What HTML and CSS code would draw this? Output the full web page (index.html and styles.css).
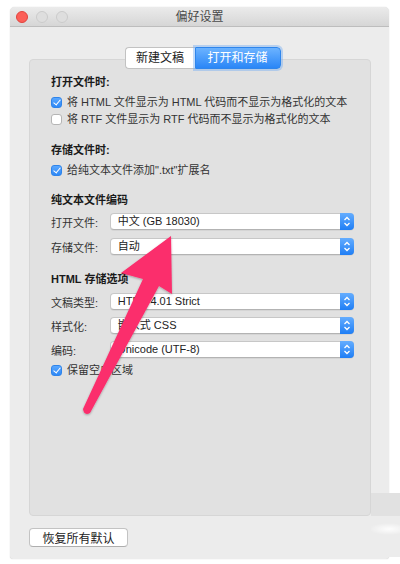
FILE: index.html
```html
<!DOCTYPE html>
<html lang="zh-CN">
<head>
  <meta charset="UTF-8" />
  <title>偏好设置</title>
  <link rel="stylesheet" href="styles.css">
</head>
<body>
  <div class="window">
    <div class="titlebar">
      <div class="lights">
        <span class="light red"></span>
        <span class="light"></span>
        <span class="light"></span>
      </div>
      <div class="title">偏好设置</div>
    </div>

    <div class="content">
      <div class="panel">
        <div class="segmented">
          <span class="seg">新建文稿</span>
          <span class="seg active">打开和存储</span>
        </div>

        <div class="sec s1">
          <div class="sec-title">打开文件时:</div>
          <label class="check"><span class="box on"></span>将 HTML 文件显示为 HTML 代码而不显示为格式化的文本</label>
          <label class="check"><span class="box"></span>将 RTF 文件显示为 RTF 代码而不显示为格式化的文本</label>
        </div>

        <div class="sec s2">
          <div class="sec-title">存储文件时:</div>
          <label class="check"><span class="box on"></span>给纯文本文件添加".txt"扩展名</label>
        </div>

        <div class="sec s3">
          <div class="sec-title">纯文本文件编码</div>
          <div class="field"><span class="label">打开文件:</span><span class="popup">中文 (GB 18030)</span></div>
          <div class="field"><span class="label">存储文件:</span><span class="popup">自动</span></div>
        </div>

        <div class="sec s4">
          <div class="sec-title">HTML 存储选项</div>
          <div class="field"><span class="label">文稿类型:</span><span class="popup">HTML 4.01 Strict</span></div>
          <div class="field"><span class="label">样式化:</span><span class="popup">嵌入式 CSS</span></div>
          <div class="field"><span class="label">编码:</span><span class="popup">Unicode (UTF-8)</span></div>
          <label class="check last"><span class="box on"></span>保留空白区域</label>
        </div>
      </div>

      <div class="footer">
        <button class="btn">恢复所有默认</button>
      </div>
    </div>
  </div>

  <!-- screenshot seam at the lower right -->
  <div class="seam">
    <div class="seam-top"></div>
    <div class="seam-bottom"></div>
  </div>

  <svg class="arrow" width="400" height="564" viewBox="0 0 400 564">
    <defs>
      <filter id="sh" x="-20%" y="-20%" width="140%" height="140%">
        <feDropShadow dx="0" dy="1" stdDeviation="1" flood-color="#000" flood-opacity="0.3"/>
      </filter>
    </defs>
    <path filter="url(#sh)" fill="#fb2d6c"
      d="M171 236 L121 273 L143 279 L83 409 Q84 416 90 413 L159 286 L172 294 Z"/>
  </svg>
</body>
</html>
```

FILE: styles.css
```css
* { margin: 0; padding: 0; box-sizing: border-box; }

body {
  background: #ffffff;
  font-family: "Liberation Sans", "Noto Sans CJK SC", sans-serif;
  font-size: 11px;
  color: #222;
  width: 400px; height: 564px;
  overflow: hidden;
}

.window {
  margin: 7px 0 0 10px;
  width: 379px; height: 552px;
  background: #ececec;
  border-radius: 5px 5px 3px 3px;
  box-shadow: 0 0 1px rgba(0,0,0,0.25);
  overflow: hidden;
}

.titlebar {
  height: 20px;
  display: flex; align-items: center;
  background: linear-gradient(#ebebeb, #d6d6d6);
  border-bottom: 1px solid #bdbdbd;
  position: relative;
}
.lights { display: flex; gap: 8px; padding-left: 6px; }
.light {
  width: 12px; height: 12px; border-radius: 50%;
  background: #dedede; border: 1px solid #cbcbcb;
}
.light.red { background: #fc5f58; border-color: #e0443e; }
.title {
  position: absolute; left: 0; right: 0; top: 0;
  text-align: center; line-height: 20px;
  font-size: 12px; color: #4a4a4a;
}

.content { padding: 32px 18px 0 19px; }

.panel {
  height: 457px;
  background: #e1e1e1;
  border: 1px solid #d6d6d6;
  border-radius: 4px;
  padding: 0 16px 0 21px;
  display: flex; flex-direction: column;
}

.segmented {
  margin: -13px auto 0;
  display: flex;
  height: 22px;
  font-size: 12px;
}
.seg {
  width: 70px;
  line-height: 20px;
  text-align: center;
  background: #fff;
  border: 1px solid #c2c2c2;
  border-right: none;
  border-radius: 4px 0 0 4px;
  color: #222;
}
.seg.active {
  width: 86px;
  color: #fff;
  background: linear-gradient(#6cb3ff, #2a86f7);
  border: 1px solid #2f86ec;
  border-radius: 0 4px 4px 0;
  box-shadow: 0 0 0 2px rgba(120,175,245,0.45);
}

.sec { display: flex; flex-direction: column; }
.s1 { margin-top: 5px; }
.s2 { margin-top: 14px; }
.s3 { margin-top: 13px; }
.s4 { margin-top: 16px; }

.sec-title {
  height: 17px; line-height: 17px;
  font-weight: bold; color: #1a1a1a;
}

.check {
  height: 17px; line-height: 17px;
  display: flex; align-items: center; gap: 5px;
  color: #333;
}
.sec-title + .check { margin-top: 3px; }
.check.last { margin-top: 4px; }

.box {
  width: 11px; height: 11px;
  border: 1px solid #b5b5b5; border-radius: 3px;
  background: #fff;
  flex: none;
}
.box.on {
  border-color: #2f84ea;
  background: linear-gradient(#5aa7ff, #2d88f6) ;
  position: relative;
}
.box.on::after {
  content: "";
  position: absolute; left: 3px; top: 0px;
  width: 3px; height: 6px;
  border: solid #fff; border-width: 0 1.5px 1.5px 0;
  transform: rotate(40deg);
}

.field {
  height: 17px;
  display: flex; align-items: center;
  margin-top: 8px;
}
.sec-title + .field { margin-top: 4px; }
.s4 .sec-title + .field { margin-top: 5px; }
.s4 .field + .field { margin-top: 7px; }

.label { width: 59px; color: #333; }
.popup {
  position: relative;
  width: 245px; height: 17px;
  line-height: 15px;
  padding-left: 7px;
  background: #fff;
  border: 1px solid #c7c7c7;
  border-bottom-color: #b3b3b3;
  border-radius: 4px;
  box-shadow: 0 1px 0 rgba(0,0,0,0.05);
  color: #222;
}
.popup::after {
  content: "";
  position: absolute; right: -1px; top: -1px;
  width: 14px; height: 17px;
  border-radius: 0 4px 4px 0;
  background:
    url("data:image/svg+xml;utf8,<svg xmlns='http://www.w3.org/2000/svg' width='14' height='17'><path d='M4.5 7 L7 4.5 L9.5 7 M4.5 10 L7 12.5 L9.5 10' fill='none' stroke='white' stroke-width='1.3'/></svg>") center / 14px 17px no-repeat,
    linear-gradient(#64adff, #1f7ef5);
}

.footer { padding-top: 12px; }
.btn {
  width: 99px; height: 19px;
  font-family: inherit; font-size: 12px;
  color: #222;
  background: #fff;
  border: 1px solid #c3c3c3;
  border-bottom-color: #aeaeae;
  border-radius: 4px;
}

.seam {
  position: absolute; left: 371px; top: 493px;
  width: 29px;
}
.seam-top { height: 23px; background: #e1e1e1; }
.seam-bottom {
  height: 41px;
  background:
    radial-gradient(ellipse 20px 6px at 18px 13px, rgba(255,255,255,0.9), rgba(255,255,255,0)),
    #ececec;
}

.arrow { position: absolute; left: 0; top: 0; pointer-events: none; }
```
